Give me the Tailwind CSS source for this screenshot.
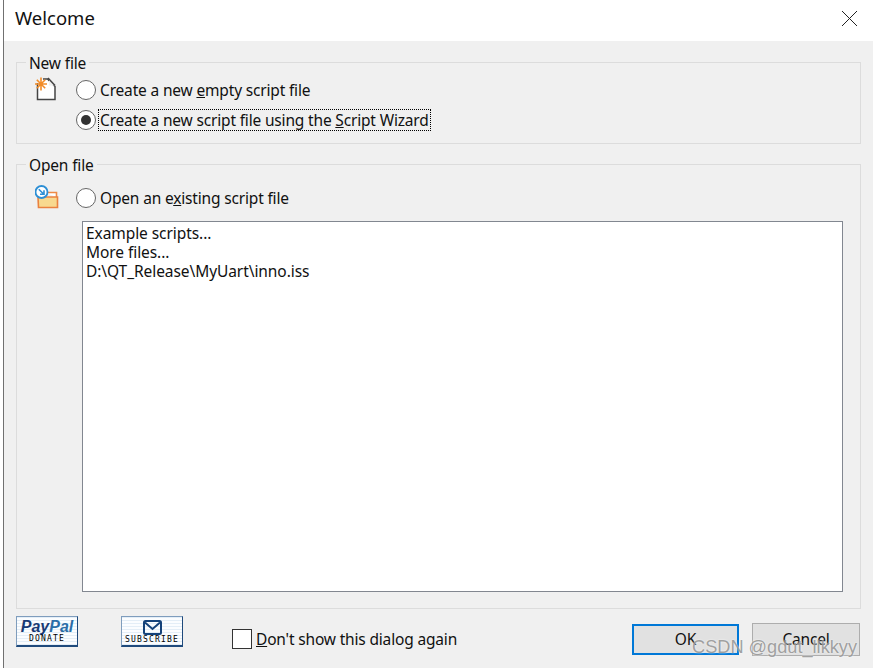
<!DOCTYPE html>
<html lang="en">
<head>
  <meta charset="UTF-8" />
  <title>Welcome</title>
  <script src="https://cdn.jsdelivr.net/npm/@tailwindcss/browser@4"></script>
</head>
<body class="relative w-[873px] h-[668px] overflow-hidden bg-white font-['Noto_Sans',sans-serif] text-[15.5px] tracking-[-0.17px] leading-[20px] text-[#111]">

  <div class="ml-[3px] h-full flex flex-col border-l-[1.5px] border-[#707070]">

    <!-- title bar -->
    <div class="h-[41px] shrink-0 flex items-center justify-between pl-[11px] pr-[15px] bg-white">
      <span class="text-[18.5px] tracking-normal -mt-[5px]">Welcome</span>
      <svg class="-mt-[4px]" width="17" height="17" viewBox="0 0 17 17" stroke="#222" stroke-width="1" fill="none"><path d="M1 1L16 16M16 1L1 16" /></svg>
    </div>

    <div class="flex-1 flex flex-col bg-[#f0f0f0] pl-[12px] pr-[12px]">

      <!-- new file -->
      <fieldset class="mt-[11px] border border-[#dcdcdc] pt-[8px] pb-[13px]">
        <legend class="ml-[9px] px-[3px] leading-[20px]"><span class="relative top-[1px]">New file</span></legend>
        <div class="flex pl-[18px]">
          <svg class="w-[24px] h-[26px] -mt-[5px] mr-[17px]" viewBox="0 0 24 26" fill="none">
            <path d="M2.5 8V24.5H20V11.5L12.5 4H8" fill="#fff" stroke="#444" stroke-width="1.5" />
            <path d="M14 3.5L14 10.5H20" fill="#f0f0f0" stroke="none" />
            <path d="M13 3L20 10.5" stroke="#444" stroke-width="1.5" />
            <path d="M6 2.5V15.5M0 9H12M1.8 4.8L10.2 13.2M10.2 4.8L1.8 13.2" stroke="#f28c28" stroke-width="1.6" />
          </svg>
          <div class="flex flex-col gap-[10px]">
            <div class="flex items-center h-[20px]">
              <span class="w-[20px] h-[20px] rounded-full border border-[#666] bg-white mr-[4px]"></span>
              <span>Create a new <u>e</u>mpty script file</span>
            </div>
            <div class="flex items-center h-[20px]">
              <span class="w-[20px] h-[20px] rounded-full border border-[#666] bg-white mr-[3px] flex items-center justify-center">
                <span class="w-[10px] h-[10px] rounded-full bg-[#333]"></span>
              </span>
              <span class="px-[1px] outline-1 outline-dotted outline-black">Create a new script file using the <u>S</u>cript Wizard</span>
            </div>
          </div>
        </div>
      </fieldset>

      <!-- open file -->
      <fieldset class="mt-[10px] h-[455px] border border-[#dcdcdc] flex flex-col">
        <legend class="ml-[9px] px-[3px] leading-[20px]"><span class="relative top-[1px]">Open file</span></legend>
        <div class="flex items-center h-[20px] mt-[14px] pl-[18px]">
          <svg class="w-[24px] h-[26px] mr-[17px]" viewBox="0 0 24 26" fill="none">
            <path d="M10 7.5H21.5V12" fill="#fff" stroke="#ee8a45" stroke-width="1.6" />
            <path d="M3 12H22.5V22.5H3.5Z" fill="#f8d98f" stroke="#ea8240" stroke-width="1.6" />
            <circle cx="6.5" cy="7" r="6" fill="#fff" stroke="#2d8fd5" stroke-width="1.8" />
            <path d="M3.8 4.2L8.6 9M9 5.2V9.2H5" stroke="#2d8fd5" stroke-width="1.6" />
          </svg>
          <span class="w-[20px] h-[20px] rounded-full border border-[#666] bg-white mr-[4px]"></span>
          <span>Open an e<u>x</u>isting script file</span>
        </div>
        <div class="mt-[13px] ml-[65px] w-[761px] h-[371px] border border-[#828790] bg-white px-[3px] pt-[2px] leading-[19px] tracking-[-0.07px]">
          <div>Example scripts...</div>
          <div>More files...</div>
          <div>D:\QT_Release\MyUart\inno.iss</div>
        </div>
      </fieldset>

      <!-- footer -->
      <div class="flex items-start mt-[7px]">
        <div class="w-[62px] h-[31px] border border-[#1f4a7c] border-t-[#7f9dbd] border-l-[#7f9dbd] border-b-2 bg-[repeating-linear-gradient(0deg,#e4eef7_0,#e4eef7_1px,#fbfdff_1px,#fbfdff_3px)] flex flex-col items-center">
          <span class="font-['Liberation_Sans',sans-serif] font-bold italic text-[16px] tracking-normal leading-[15px] mt-[2px]"><span class="text-[#173a75]">Pay</span><span class="text-[#2b6ea8]">Pal</span></span>
          <span class="font-['DejaVu_Sans_Mono',monospace] text-[8px] leading-[9px] tracking-[1.2px] text-black">DONATE</span>
        </div>
        <div class="ml-[43px] w-[62px] h-[31px] border border-[#1f4a7c] border-t-[#7f9dbd] border-l-[#7f9dbd] border-b-2 bg-[repeating-linear-gradient(0deg,#e4eef7_0,#e4eef7_1px,#fbfdff_1px,#fbfdff_3px)] flex flex-col items-center">
          <svg class="mt-[3px]" width="19" height="15" viewBox="0 0 19 15" fill="none" stroke="#14427a" stroke-width="2"><rect x="1" y="1" width="17" height="13" rx="1.5" /><path d="M2 2.5L9.5 9L17 2.5" /></svg>
          <span class="font-['DejaVu_Sans_Mono',monospace] text-[8px] leading-[9px] tracking-[1.2px] text-black">SUBSCRIBE</span>
        </div>
        <div class="flex items-center ml-[49px] mt-[13px] h-[20px]">
          <span class="w-[20px] h-[20px] border border-[#333] bg-white mr-[4px]"></span>
          <span><u>D</u>on't show this dialog again</span>
        </div>
        <div class="ml-auto mr-[1px] flex items-start gap-[13px] mt-[8px]">
          <div class="w-[107px] h-[31px] border-2 border-[#0078d7] bg-[#e1e1e1] flex items-center justify-center pb-[2px]">OK</div>
          <div class="w-[108px] h-[33px] -mt-[1px] border border-[#adadad] bg-[#e1e1e1] flex items-center justify-center pb-[2px]">Cancel</div>
        </div>
      </div>
    </div>
  </div>

  <!-- watermark -->
  <div class="absolute left-[692px] top-[637px] font-['Liberation_Sans',sans-serif] text-[18.2px] tracking-normal leading-[20px] text-[#8a8a8a]/80 [text-shadow:0_0_2px_rgba(255,255,255,0.9)]">CSDN @gdut_llkkyy</div>
</body>
</html>
